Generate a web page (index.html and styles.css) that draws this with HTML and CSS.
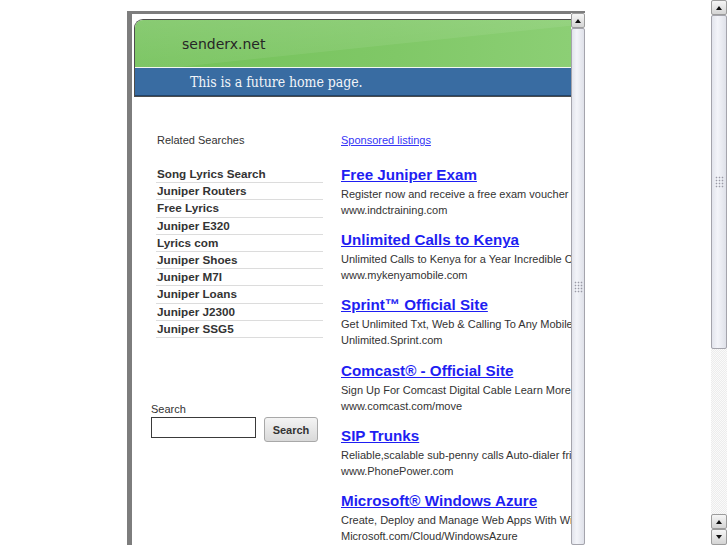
FILE: index.html
```html
<!DOCTYPE html>
<html>
<head>
<meta charset="utf-8">
<title>senderx.net</title>
<link rel="stylesheet" href="styles.css">
</head>
<body>
<div class="screen">
  <div class="viewport">
    <div class="frame">
      <div class="frame-content">
        <div class="header">
          <div class="header-top"><span class="site">senderx.net</span></div>
          <div class="header-bar"><span class="tagline">This is a future home page.</span></div>
        </div>
        <div class="main">
          <div class="left">
            <div class="related">
              <div class="related-title">Related Searches</div>
              <ul class="related-list">
                <li>Song Lyrics Search</li>
                <li>Juniper Routers</li>
                <li>Free Lyrics</li>
                <li>Juniper E320</li>
                <li>Lyrics com</li>
                <li>Juniper Shoes</li>
                <li>Juniper M7I</li>
                <li>Juniper Loans</li>
                <li>Juniper J2300</li>
                <li>Juniper SSG5</li>
              </ul>
            </div>
            <form class="search">
              <label class="search-label">Search</label>
              <div class="search-row">
                <input class="search-input" type="text">
                <button class="search-btn" type="button">Search</button>
              </div>
            </form>
          </div>
          <div class="right">
            <a class="sponsored">Sponsored listings</a>
            <div class="ads">
              <div class="ad">
                <a class="ad-title">Free Juniper Exam</a>
                <div class="ad-desc">Register now and receive a free exam voucher for your Juniper certification</div>
                <div class="ad-url">www.indctraining.com</div>
              </div>
              <div class="ad">
                <a class="ad-title">Unlimited Calls to Kenya</a>
                <div class="ad-desc">Unlimited Calls to Kenya for a Year Incredible Calling Rates</div>
                <div class="ad-url">www.mykenyamobile.com</div>
              </div>
              <div class="ad">
                <a class="ad-title">Sprint™ Official Site</a>
                <div class="ad-desc">Get Unlimited Txt, Web &amp; Calling To Any Mobile Phone</div>
                <div class="ad-url">Unlimited.Sprint.com</div>
              </div>
              <div class="ad">
                <a class="ad-title">Comcast® - Official Site</a>
                <div class="ad-desc">Sign Up For Comcast Digital Cable Learn More Today</div>
                <div class="ad-url">www.comcast.com/move</div>
              </div>
              <div class="ad">
                <a class="ad-title">SIP Trunks</a>
                <div class="ad-desc">Reliable,scalable sub-penny calls Auto-dialer friendly</div>
                <div class="ad-url">www.PhonePower.com</div>
              </div>
              <div class="ad">
                <a class="ad-title">Microsoft® Windows Azure</a>
                <div class="ad-desc">Create, Deploy and Manage Web Apps With Windows Azure</div>
                <div class="ad-url">Microsoft.com/Cloud/WindowsAzure</div>
              </div>
            </div>
          </div>
        </div>
      </div>
      <div class="scrollbar inner">
        <div class="sb-btn up"></div>
        <div class="sb-thumb fill"><div class="grip"></div></div>
      </div>
    </div>
  </div>
  <div class="scrollbar outer">
    <div class="sb-btn up"></div>
    <div class="sb-thumb main-thumb"><div class="grip"></div></div>
    <div class="sb-track"></div>
    <div class="sb-btn up"></div>
    <div class="sb-btn down"></div>
  </div>
</div>
</body>
</html>
```
FILE: styles.css
```css
* { box-sizing: border-box; }
html, body { margin: 0; padding: 0; }
body {
  width: 727px;
  height: 545px;
  overflow: hidden;
  background: #fff;
  font-family: "Liberation Sans", Arial, sans-serif;
}
.screen { display: flex; height: 545px; }
.viewport { flex: 1; min-width: 0; padding: 11px 0 0 127px; overflow: hidden; }
.frame {
  width: 458px;
  height: 534px;
  display: flex;
  border-top: 3px solid #7d7d7d;
  border-left: 5px solid #7d7d7d;
}
.frame-content { flex: 1; min-width: 0; overflow: hidden; background: #fff; }

.header {
  margin: 5px 0 0 2px;
  border: 1px solid #4d4d4d;
  border-right: none;
  border-top-left-radius: 9px;
  overflow: hidden;
}
.header-top {
  height: 47px;
  padding-left: 47px;
  display: flex;
  align-items: center;
  background:
    linear-gradient(174deg, rgba(255,255,255,0.16) 0%, rgba(255,255,255,0.07) 55%, rgba(255,255,255,0) 56%),
    linear-gradient(to right, #72c158, #80c867 60%, #8ccf75);
}
.site { font-family: "DejaVu Sans", sans-serif; font-size: 14px; color: #262626; }
.header-bar {
  height: 29px;
  border-top: 1px solid #f4f8f0;
  border-bottom: 1px solid #22446a;
  background: #396ca2;
  padding-left: 55px;
  display: flex;
  align-items: center;
}
.tagline {
  font-family: "DejaVu Serif Condensed", "DejaVu Serif", serif;
  font-size: 14px;
  color: #f2f4f8;
  letter-spacing: -0.08px;
}

.main { display: flex; padding: 36px 0 0 19px; }
.left { width: 172px; flex: none; }
.related { padding-left: 5px; }
.related-title { font-size: 11px; line-height: 14px; color: #333; padding-left: 1px; }
.related-list { list-style: none; margin: 19px 0 0; padding: 0; }
.related-list li {
  line-height: 16.2px;
  border-bottom: 1px solid #dcdcdc;
  font-weight: bold;
  font-size: 11.7px;
  color: #333;
  padding-left: 1px;
}
.search { margin: 65px 0 0; }
.search-label { display: block; font-size: 11px; line-height: 13px; color: #333; }
.search-row { display: flex; align-items: flex-start; gap: 8px; margin-top: 1px; }
.search-input {
  width: 105px;
  height: 21px;
  margin: 0;
  border: 1px solid #3a3a3a;
  background: #fff;
  padding: 0;
}
.search-btn {
  width: 54px;
  height: 25px;
  margin: 0;
  border: 1px solid #a8a8a8;
  border-radius: 3px;
  background: linear-gradient(#f4f4f4, #d9d9d9);
  font-family: "Liberation Sans", Arial, sans-serif;
  font-weight: bold;
  font-size: 11px;
  color: #333;
  padding: 0;
}

.right { margin-left: 18px; padding-top: 0; white-space: nowrap; }
.sponsored {
  display: block;
  font-size: 11px;
  line-height: 14px;
  color: #3535f6;
  text-decoration: underline;
}
.ads { margin-top: 19px; }
.ad { margin-bottom: 13.2px; }
.ad-title {
  display: block;
  font-size: 15.2px;
  font-weight: bold;
  line-height: 18px;
  color: #1e1ef2;
  text-decoration: underline;
  margin-bottom: 2px;
}
.ad-desc, .ad-url { font-size: 11px; line-height: 16px; color: #333; }

/* scrollbars */
.scrollbar { display: flex; flex-direction: column; flex: none; background: #f3f3f5; }
.outer { width: 16px; }
.inner { width: 14px; margin-top: -1px; }
.sb-btn {
  height: 15px;
  flex: none;
  border: 1px solid #9c9c9c;
  border-radius: 2px;
  background: linear-gradient(#f6f6f6, #d4d4d4);
  display: flex;
  align-items: center;
  justify-content: center;
}
.sb-btn::before {
  content: "";
  width: 0;
  height: 0;
  border-left: 3.5px solid transparent;
  border-right: 3.5px solid transparent;
}
.sb-btn.up::before { border-bottom: 4px solid #111; }
.sb-btn.down::before { border-top: 4px solid #111; }
.sb-btn.down { height: 16px; }
.sb-thumb {
  flex: none;
  border: 1px solid #a4a4ac;
  border-radius: 2px;
  background: linear-gradient(to right, #e2e4ec, #f3f4f9 40%, #dfe1e9);
  display: flex;
  align-items: center;
  justify-content: center;
}
.sb-thumb.fill { flex: 1; }
.main-thumb { height: 334px; }
.grip {
  width: 9px;
  height: 12px;
  background-image: radial-gradient(circle, #9a9aa6 0.7px, transparent 1.1px);
  background-size: 3px 3px;
}
.sb-track {
  flex: 1;
  background: repeating-conic-gradient(#ececec 0 25%, #fafafa 0 50%) 0 0 / 2px 2px;
}
```
